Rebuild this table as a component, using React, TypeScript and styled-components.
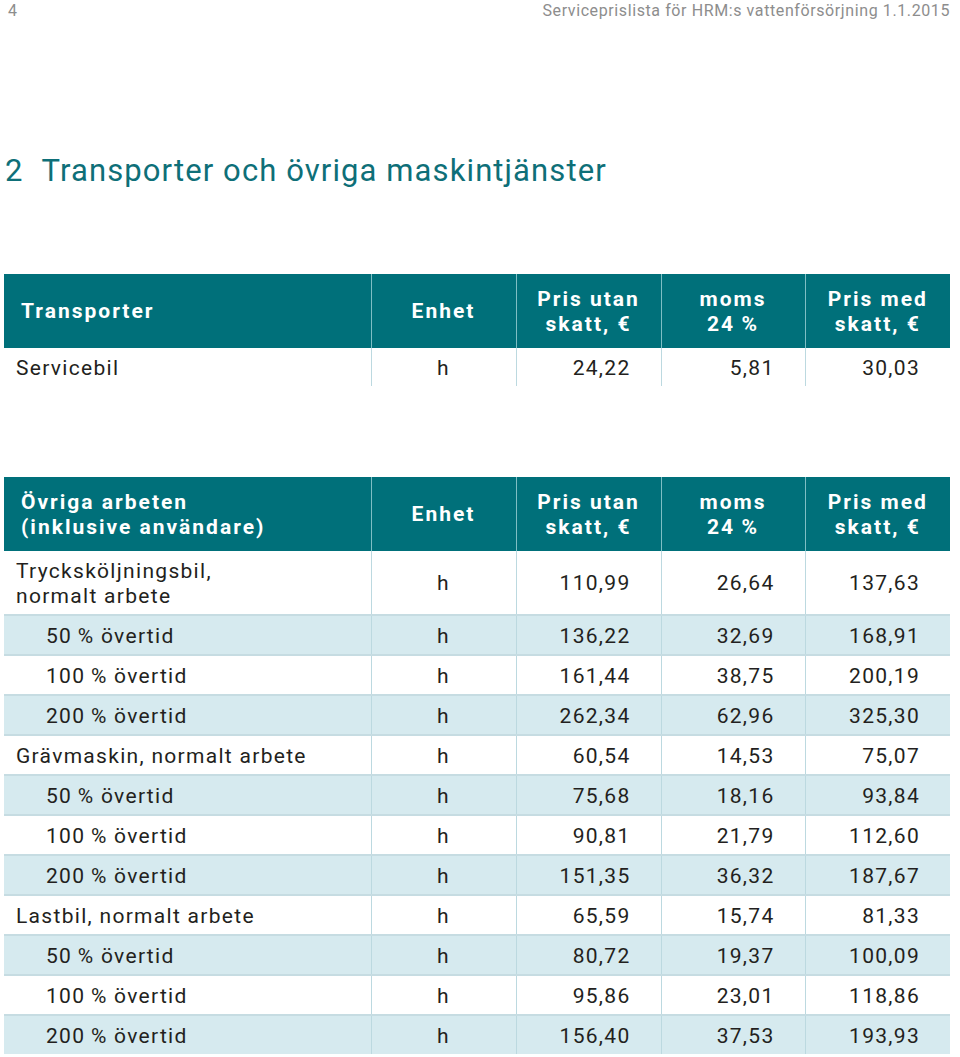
import styled, { createGlobalStyle } from "styled-components";

const GlobalStyle = createGlobalStyle`
  html, body {
    margin: 0;
    padding: 0;
    background: #ffffff;
  }
  body {
    font-family: Roboto, "Liberation Sans", sans-serif;
    color: #231f20;
  }
`;

const Page = styled.div`
  width: 960px;
  height: 1057px;
  overflow: hidden;
`;

const TopBar = styled.div`
  display: flex;
  justify-content: space-between;
  align-items: flex-start;
  height: 24px;
  padding: 0 10px 0 8px;
  font-size: 16px;
  line-height: 22px;
  color: #8d8d8d;
  letter-spacing: 0.6px;
`;

const Title = styled.h1`
  margin: 0;
  padding: 127px 0 0 5px;
  height: 123px;
  font-size: 31px;
  line-height: 40px;
  font-weight: 400;
  color: #0e6f78;
  letter-spacing: 1.1px;
  span {
    margin-right: 18px;
  }
`;

const Table = styled.table<{ $gap: number }>`
  margin: ${(p) => p.$gap}px 0 0 4px;
  border-collapse: collapse;
  table-layout: fixed;
  width: 946px;
`;

const HeadCell = styled.th<{ $align?: string }>`
  background: #00707a;
  color: #ffffff;
  font-size: 21px;
  font-weight: 700;
  line-height: 25px;
  letter-spacing: 2px;
  height: 73px;
  padding: 1px 0 0 ${(p) => (p.$align === "left" ? "17px" : "0")};
  text-align: ${(p) => p.$align || "center"};
  vertical-align: middle;
  border-left: 1px solid #7fbec4;
  &:first-child {
    border-left: none;
  }
`;

const Row = styled.tr<{ $shade: boolean; $last?: boolean }>`
  background: ${(p) => (p.$shade ? "#d6eaef" : "#ffffff")};
  border-bottom: ${(p) => (p.$last ? "none" : "2px solid #c6dce2")};
`;

const Cell = styled.td<{ $kind: "label" | "unit" | "num"; $indent?: boolean; $tall?: boolean }>`
  height: ${(p) => (p.$tall ? "61px" : "36px")};
  padding: 2px 0 0;
  padding-left: ${(p) => (p.$kind === "label" ? (p.$indent ? "42px" : "12px") : "0")};
  padding-right: ${(p) => (p.$kind === "num" ? "30px" : "0")};
  text-align: ${(p) => (p.$kind === "label" ? "left" : p.$kind === "unit" ? "center" : "right")};
  font-size: 21px;
  line-height: 25px;
  letter-spacing: 1.3px;
  color: #231f20;
  vertical-align: middle;
  border-left: 1px solid #bcd9e0;
  &:first-child {
    border-left: none;
  }
`;

const Lines = styled.span`
  display: block;
`;

type Line = { label: string; indent?: boolean; tall?: boolean; values: [string, string, string] };

const pct = (n: number) => `${n}\u2009% övertid`;

const transport: Line[] = [{ label: "Servicebil", values: ["24,22", "5,81", "30,03"] }];

const other: Line[] = [
  { label: "Trycksköljningsbil,\nnormalt arbete", tall: true, values: ["110,99", "26,64", "137,63"] },
  { label: pct(50), indent: true, values: ["136,22", "32,69", "168,91"] },
  { label: pct(100), indent: true, values: ["161,44", "38,75", "200,19"] },
  { label: pct(200), indent: true, values: ["262,34", "62,96", "325,30"] },
  { label: "Grävmaskin, normalt arbete", values: ["60,54", "14,53", "75,07"] },
  { label: pct(50), indent: true, values: ["75,68", "18,16", "93,84"] },
  { label: pct(100), indent: true, values: ["90,81", "21,79", "112,60"] },
  { label: pct(200), indent: true, values: ["151,35", "36,32", "187,67"] },
  { label: "Lastbil, normalt arbete", values: ["65,59", "15,74", "81,33"] },
  { label: pct(50), indent: true, values: ["80,72", "19,37", "100,09"] },
  { label: pct(100), indent: true, values: ["95,86", "23,01", "118,86"] },
  { label: pct(200), indent: true, values: ["156,40", "37,53", "193,93"] },
];

function Multi({ text }: { text: string }) {
  return (
    <>
      {text.split("\n").map((t, i) => (
        <Lines key={i}>{t}</Lines>
      ))}
    </>
  );
}

function PriceTable({ gap, title, rows }: { gap: number; title: string; rows: Line[] }) {
  return (
    <Table $gap={gap}>
      <colgroup>
        <col style={{ width: 367 }} />
        <col style={{ width: 145 }} />
        <col style={{ width: 145 }} />
        <col style={{ width: 144 }} />
        <col style={{ width: 145 }} />
      </colgroup>
      <thead>
        <tr>
          <HeadCell $align="left">
            <Multi text={title} />
          </HeadCell>
          <HeadCell>Enhet</HeadCell>
          <HeadCell>
            <Multi text={"Pris utan\nskatt, €"} />
          </HeadCell>
          <HeadCell>
            <Multi text={"moms\n24\u2009%"} />
          </HeadCell>
          <HeadCell>
            <Multi text={"Pris med\nskatt, €"} />
          </HeadCell>
        </tr>
      </thead>
      <tbody>
        {rows.map((r, i) => (
          <Row key={i} $shade={i % 2 === 1} $last={i === rows.length - 1}>
            <Cell $kind="label" $indent={r.indent} $tall={r.tall}>
              <Multi text={r.label} />
            </Cell>
            <Cell $kind="unit">h</Cell>
            {r.values.map((v, j) => (
              <Cell key={j} $kind="num">
                {v}
              </Cell>
            ))}
          </Row>
        ))}
      </tbody>
    </Table>
  );
}

export default function App() {
  return (
    <Page>
      <GlobalStyle />
      <TopBar>
        <span>4</span>
        <span>Serviceprislista för HRM:s vattenförsörjning 1.1.2015</span>
      </TopBar>
      <Title>
        <span>2</span>Transporter och övriga maskintjänster
      </Title>
      <PriceTable gap={0} title="Transporter" rows={transport} />
      <PriceTable gap={91} title={"Övriga arbeten\n(inklusive användare)"} rows={other} />
    </Page>
  );
}
